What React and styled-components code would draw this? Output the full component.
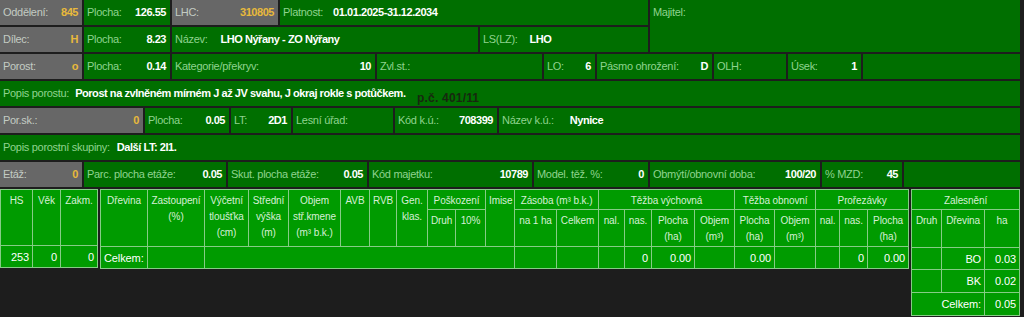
import React from 'react';
import styled, { createGlobalStyle } from 'styled-components';

const Global = createGlobalStyle`
  body {
    margin: 0;
    background: #1d1d1d;
    font-family: "Liberation Sans", Arial, sans-serif;
  }
`;

const Page = styled.div`
  width: 1024px;
  height: 317px;
  overflow: hidden;
  background: #1d1d1d;
`;

const Top = styled.div`
  display: flex;
  flex-direction: column;
  gap: 2px;
  width: 1020px;
`;

const HeadBlock = styled.div`
  display: flex;
  gap: 2px;
  height: 52px;
`;

const HeadLeft = styled.div`
  display: flex;
  flex-direction: column;
  gap: 2px;
  width: 648px;
`;

const Row = styled.div`
  display: flex;
  gap: 2px;
  height: 25px;
  position: relative;
`;

const Cell = styled.div`
  display: flex;
  align-items: ${p => (p.$top ? 'flex-start' : 'center')};
  box-sizing: border-box;
  width: ${p => (p.$w ? p.$w + 'px' : 'auto')};
  flex: ${p => (p.$w ? 'none' : '1')};
  padding: ${p => (p.$top ? '6px 4px 0 3px' : '0 4px 0 3px')};
  background: ${p => (p.$gray ? '#676767' : '#006f00')};
  color: ${p => (p.$gray ? '#c3cbc3' : '#8fd38f')};
  font-size: 11px;
  letter-spacing: -0.3px;
  line-height: 13px;
  white-space: nowrap;
  overflow: hidden;
`;

const Value = styled.span`
  margin-left: ${p => (p.$gap !== undefined ? p.$gap + 'px' : 'auto')};
  padding-left: ${p => (p.$gap !== undefined ? '0' : '6px')};
  font-weight: bold;
  letter-spacing: -0.45px;
  color: ${p => (p.$gray ? '#e8b93c' : '#ffffff')};
`;

const Note = styled.span`
  position: absolute;
  left: 417px;
  top: 10px;
  font-family: "Liberation Sans", Arial, sans-serif;
  font-weight: bold;
  font-size: 12px;
  color: #17280f;
  letter-spacing: 0.2px;
`;

const Tables = styled.div`
  display: flex;
  gap: 2px;
  align-items: flex-start;
  margin-top: 2px;
`;

const Grid = styled.table`
  border-collapse: collapse;
  table-layout: fixed;
  width: ${p => p.$w}px;
  background: #009b00;
  font-size: 10px;
  letter-spacing: -0.1px;

  th, td {
    border: 1px solid #86cc86;
    padding: 0 3px;
    overflow: hidden;
    white-space: nowrap;
  }
`;

const GRow = styled.tr`
  height: ${p => p.$h}px;
`;

const Th = styled.th`
  font-weight: normal;
  color: #d6efd6;
  vertical-align: top;
  text-align: center;
  line-height: 16px;
  padding-top: 3px !important;
`;

const Td = styled.td`
  color: #ffffff;
  font-size: 11px;
  text-align: ${p => p.$align || 'right'};
  vertical-align: middle;
`;

function Field({ label, value, w, gray, gap, top }) {
  return (
    <Cell $w={w} $gray={gray} $top={top}>
      <span>{label}</span>
      {value !== undefined && (
        <Value $gray={gray} $gap={gap}>
          {value}
        </Value>
      )}
    </Cell>
  );
}

const mainCols = [47, 57, 44, 40, 52, 29, 27, 31, 28, 30, 29, 42, 42, 26, 27, 43, 40, 40, 41, 24, 28, 41];

export default function App() {
  return (
    <Page>
      <Global />
      <Top>
        <HeadBlock>
          <HeadLeft>
            <Row>
              <Field label="Oddělení:" value="845" w={82} gray />
              <Field label="Plocha:" value="126.55" w={86} />
              <Field label="LHC:" value="310805" w={106} gray />
              <Field label="Platnost:" value="01.01.2025-31.12.2034" gap={10} />
            </Row>
            <Row>
              <Field label="Dílec:" value="H" w={82} gray />
              <Field label="Plocha:" value="8.23" w={86} />
              <Field label="Název:" value="LHO Nýřany - ZO Nýřany" w={306} gap={13} />
              <Field label="LS(LZ):" value="LHO" gap={12} />
            </Row>
          </HeadLeft>
          <Field label="Majitel:" top />
        </HeadBlock>
        <Row>
          <Field label="Porost:" value="o" w={82} gray />
          <Field label="Plocha:" value="0.14" w={86} />
          <Field label="Kategorie/překryv:" value="10" w={203} />
          <Field label="Zvl.st.:" w={165} />
          <Field label="LO:" value="6" w={51} />
          <Field label="Pásmo ohrožení:" value="D" w={115} />
          <Field label="OLH:" w={72} />
          <Field label="Úsek:" value="1" w={73} />
          <Field label="" />
        </Row>
        <Row>
          <Field label="Popis porostu:" value="Porost na zvlněném mírném J až JV svahu, J okraj rokle s potůčkem." gap={6} />
          <Note>p.č. 401/11</Note>
        </Row>
        <Row>
          <Field label="Por.sk.:" value="0" w={143} gray />
          <Field label="Plocha:" value="0.05" w={84} />
          <Field label="LT:" value="2D1" w={60} />
          <Field label="Lesní úřad:" w={100} />
          <Field label="Kód k.ú.:" value="708399" w={102} />
          <Field label="Název k.ú.:" value="Nynice" gap={16} />
        </Row>
        <Row>
          <Field label="Popis porostní skupiny:" value="Další LT: 2I1." gap={7} />
        </Row>
        <Row>
          <Field label="Etáž:" value="0" w={82} gray />
          <Field label="Parc. plocha etáže:" value="0.05" w={142} />
          <Field label="Skut. plocha etáže:" value="0.05" w={139} />
          <Field label="Kód majetku:" value="10789" w={163} />
          <Field label="Model. těž. %:" value="0" w={114} />
          <Field label="Obmýtí/obnovní doba:" value="100/20" w={170} />
          <Field label="% MZD:" value="45" w={80} />
          <Field label="" />
        </Row>
      </Top>

      <Tables>
        <Grid $w={97}>
          <colgroup>
            <col style={{ width: 32 }} />
            <col style={{ width: 28 }} />
            <col style={{ width: 37 }} />
          </colgroup>
          <tbody>
            <GRow $h={56}>
              <Th>HS</Th>
              <Th>Věk</Th>
              <Th>Zakm.</Th>
            </GRow>
            <GRow $h={22}>
              <Td>253</Td>
              <Td>0</Td>
              <Td>0</Td>
            </GRow>
          </tbody>
        </Grid>

        <Grid $w={809}>
          <colgroup>
            {mainCols.map((w, i) => (
              <col key={i} style={{ width: w }} />
            ))}
          </colgroup>
          <tbody>
            <GRow $h={20}>
              <Th rowSpan={2}>Dřevina</Th>
              <Th rowSpan={2}>Zastoupení<br />(%)</Th>
              <Th rowSpan={2}>Výčetní<br />tloušťka<br />(cm)</Th>
              <Th rowSpan={2}>Střední<br />výška<br />(m)</Th>
              <Th rowSpan={2}>Objem<br />stř.kmene<br />(m³ b.k.)</Th>
              <Th rowSpan={2}>AVB</Th>
              <Th rowSpan={2}>RVB</Th>
              <Th rowSpan={2}>Gen.<br />klas.</Th>
              <Th colSpan={2}>Poškození</Th>
              <Th rowSpan={2}>Imise</Th>
              <Th colSpan={2}>Zásoba (m³ b.k.)</Th>
              <Th colSpan={4}>Těžba výchovná</Th>
              <Th colSpan={2}>Těžba obnovní</Th>
              <Th colSpan={3}>Prořezávky</Th>
            </GRow>
            <GRow $h={37}>
              <Th>Druh</Th>
              <Th>10%</Th>
              <Th>na 1 ha</Th>
              <Th>Celkem</Th>
              <Th>nal.</Th>
              <Th>nas.</Th>
              <Th>Plocha<br />(ha)</Th>
              <Th>Objem<br />(m³)</Th>
              <Th>Plocha<br />(ha)</Th>
              <Th>Objem<br />(m³)</Th>
              <Th>nal.</Th>
              <Th>nas.</Th>
              <Th>Plocha<br />(ha)</Th>
            </GRow>
            <GRow $h={22}>
              <Td $align="left">Celkem:</Td>
              <Td />
              <Td colSpan={9} />
              <Td />
              <Td />
              <Td />
              <Td>0</Td>
              <Td>0.00</Td>
              <Td />
              <Td>0.00</Td>
              <Td />
              <Td />
              <Td>0</Td>
              <Td>0.00</Td>
            </GRow>
          </tbody>
        </Grid>

        <Grid $w={108}>
          <colgroup>
            <col style={{ width: 30 }} />
            <col style={{ width: 43 }} />
            <col style={{ width: 35 }} />
          </colgroup>
          <tbody>
            <GRow $h={19}>
              <Th colSpan={3}>Zalesnění</Th>
            </GRow>
            <GRow $h={38}>
              <Th>Druh</Th>
              <Th>Dřevina</Th>
              <Th>ha</Th>
            </GRow>
            <GRow $h={22}>
              <Td />
              <Td>BO</Td>
              <Td>0.03</Td>
            </GRow>
            <GRow $h={23}>
              <Td />
              <Td>BK</Td>
              <Td>0.02</Td>
            </GRow>
            <GRow $h={23}>
              <Td colSpan={2}>Celkem:</Td>
              <Td>0.05</Td>
            </GRow>
          </tbody>
        </Grid>
      </Tables>
    </Page>
  );
}
